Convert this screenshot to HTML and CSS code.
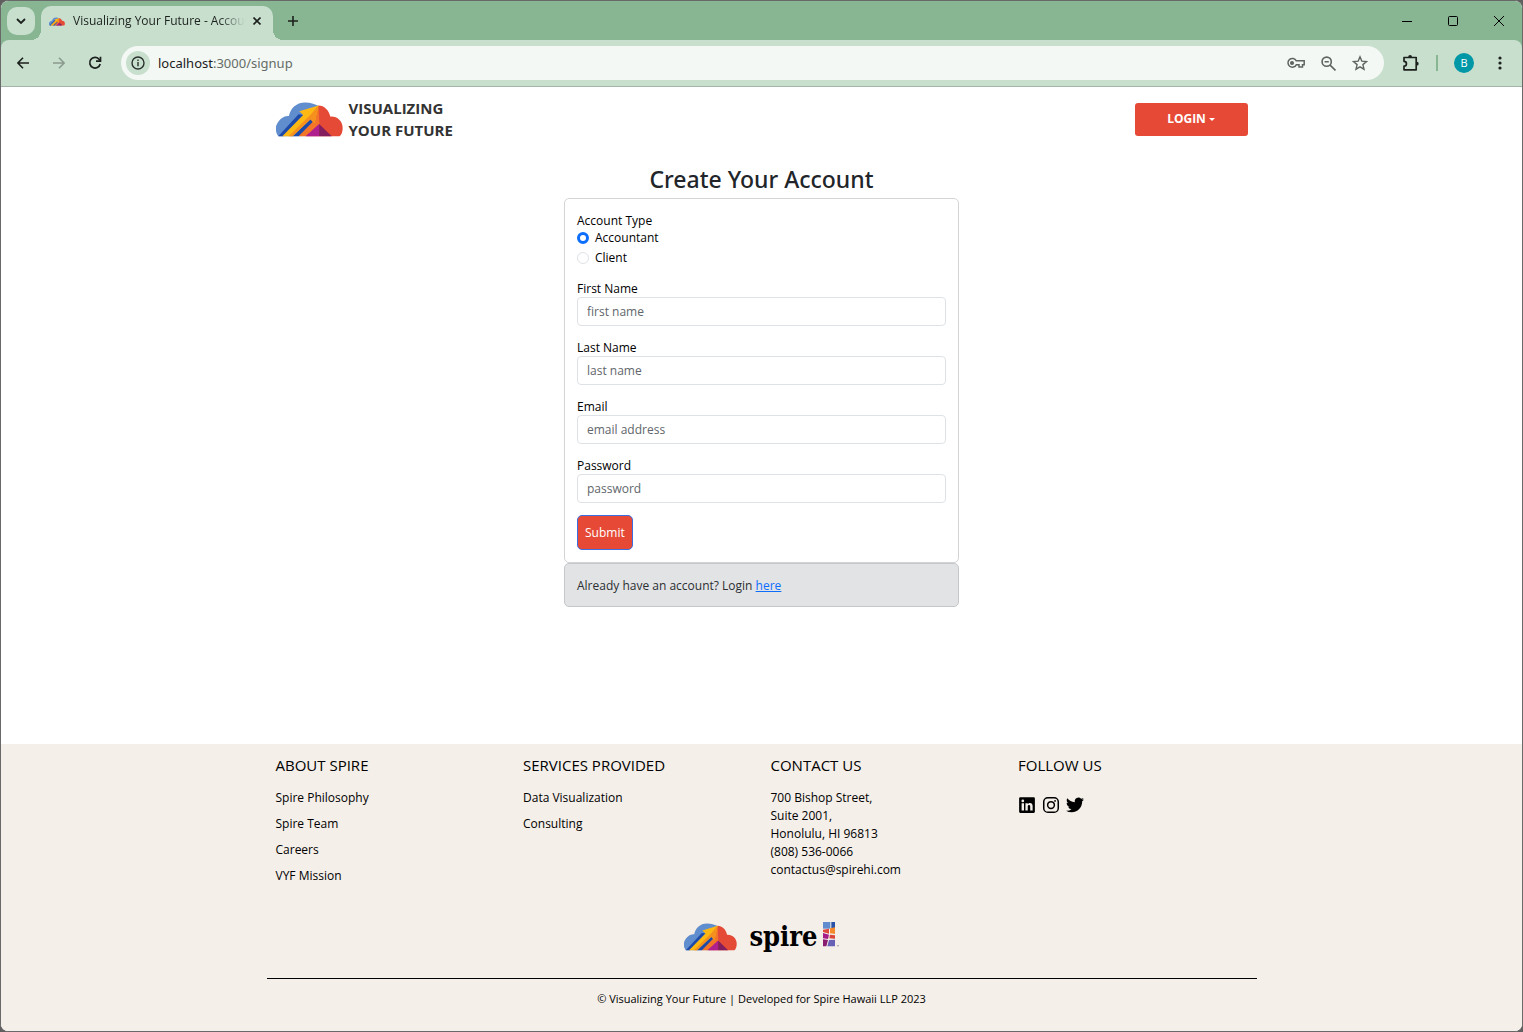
FILE: index.html
```html
<!DOCTYPE html>
<html lang="en">
<head>
<meta charset="utf-8">
<meta name="viewport" content="width=device-width, initial-scale=1">
<title>Visualizing Your Future - Account</title>
<link rel="stylesheet" href="styles.css">
</head>
<body>
<svg class="sprite" aria-hidden="true">
  <symbol id="cloud" viewBox="30 29 202 103">
    <path fill="#5f8dcd" d="M37 131C29 122 27 104 33 94c5-10 18-26 36-24 4-22 21-41 49-41 16 0 28 5 38 9l8 92z"/>
    <path fill="#e44a36" d="M158 38c17 0 32 14 36 34 19-2 37 13 37 34 0 11-3 20-9 25h-98l14-70z"/>
    <path fill="#f37527" d="M158 38l3 56-38 37H97l40-45z"/>
    <path fill="#1d4aa8" d="M37 131l61-66 14 2-60 64zM78 131l56-51 7 7-43 44z"/>
    <path fill="#fdb813" d="M49 131l63-64-12-11 58-18-12 54-12-12-54 51z"/>
    <path fill="#f58f1e" d="M158 38l-12 54-12-12-54 51H68l66-65z"/>
    <path fill="#b01f8e" d="M119 131l41-37v37z"/>
    <path fill="#831d5e" d="M160 94l38 37h-38z"/>
  </symbol>
</svg>
<div class="window">
  <div class="chrome">
    <div class="tabstrip">
      <button class="tab-search" aria-label="Search tabs"><svg width="10" height="10" viewBox="0 0 10 10" fill="none" stroke="#1c211d" stroke-width="1.8"><path d="M1 3l4 4 4-4"/></svg></button>
      <div class="tab">
        <svg class="favicon"><use href="#cloud"/></svg>
        <span class="tab-title">Visualizing Your Future - Accou</span>
        <button class="plain" aria-label="Close tab"><svg width="8" height="8" viewBox="0 0 8 8" stroke="#1c211d" stroke-width="1.6"><path d="M.5.5l7 7M7.500.5l-7 7"/></svg></button>
      </div>
      <button class="plain new-tab" aria-label="New tab"><svg width="12" height="12" viewBox="0 0 12 12" stroke="#1c211d" stroke-width="1.6"><path d="M6 1v10M1 6h10"/></svg></button>
      <div class="window-controls">
        <button class="plain" aria-label="Minimize"><svg width="10" height="10" viewBox="0 0 10 10" stroke="#000"><path d="M0 5.500h10"/></svg></button>
        <button class="plain" aria-label="Maximize"><svg width="10" height="10" viewBox="0 0 10 10" fill="none" stroke="#000"><rect x=".5" y=".5" width="9" height="9" rx="1"/></svg></button>
        <button class="plain" aria-label="Close"><svg width="10" height="10" viewBox="0 0 10 10" stroke="#000"><path d="M0 0l10 10M10 0L0 10"/></svg></button>
      </div>
    </div>
    <div class="toolbar">
      <button class="plain nav" aria-label="Back"><svg width="12" height="12" viewBox="0 0 12 12" fill="none" stroke="#1c211d" stroke-width="1.6"><path d="M12 6H1M6 .8L.9 6 6 11.200"/></svg></button>
      <button class="plain nav" aria-label="Forward"><svg width="12" height="12" viewBox="0 0 12 12" fill="none" stroke="#8b9a8f" stroke-width="1.6"><path d="M0 6h11M6 .8L11.100 6 6 11.200"/></svg></button>
      <button class="plain nav" aria-label="Reload"><svg width="14" height="14" viewBox="0 0 14 14" fill="none" stroke="#1c211d" stroke-width="1.7"><path d="M12.200 8A5.300 5.300 0 1 1 11 3.200L12.500 5"/><path d="M12.500.8V5.200H8"/></svg></button>
      <div class="omnibox">
        <span class="site-info"><svg width="14" height="14" viewBox="0 0 14 14" fill="none" stroke="#2a312c" stroke-width="1.4"><circle cx="7" cy="7" r="6"/><path d="M7 6v4.300M7 3.500v1.500"/></svg></span>
        <span class="url">localhost<span class="path">:3000/signup</span></span>
        <span class="omni-icons">
          <svg width="18" height="12" viewBox="0 0 18 12" fill="none" stroke="#5f6561" stroke-width="1.5"><path d="M9.300 3.800A4.400 4.400 0 1 0 9.300 7.800H12V10h3.500V7.800h1.700v-4z"/><circle cx="5" cy="6" r="1.300" fill="#5f6561"/></svg>
          <svg width="15" height="15" viewBox="0 0 14 14" fill="none" stroke="#5f6561" stroke-width="1.5"><circle cx="5.300" cy="5.300" r="4.300"/><path d="M8.500 8.500l5 5M3.300 5.300h4"/></svg>
          <svg width="16" height="16" viewBox="0 0 16 16" fill="none" stroke="#5f6561" stroke-width="1.4"><path d="M8 1.800l1.800 4.300 4.700.4-3.600 3.100 1.100 4.600L8 11.800l-4 2.400 1.100-4.600L1.500 6.500l4.700-.4z"/></svg>
        </span>
      </div>
      <div class="tools">
        <svg width="18" height="18" viewBox="0 0 18 18" fill="none" stroke="#1c211d" stroke-width="1.700"><path d="M2 3.500h12.200v12.300H2v-3.600a2.100 2.100 0 0 0 0-4.900z" stroke-linejoin="round"/><path d="M6.200 3a1.900 1.900 0 0 1 3.800 0zM14.800 7.800a1.900 1.900 0 0 1 0 3.800z" fill="#1c211d" stroke="none"/></svg>
        <span class="divider"></span>
        <button class="avatar" aria-label="Profile">B</button>
        <button class="plain menu" aria-label="Menu"><svg width="4" height="14" viewBox="0 0 4 14" fill="#1c211d"><circle cx="2" cy="2" r="1.600"/><circle cx="2" cy="7" r="1.600"/><circle cx="2" cy="12" r="1.600"/></svg></button>
      </div>
    </div>
  </div>

  <header class="container header">
    <a class="brand" href="#"><svg class="brand-logo"><use href="#cloud"/></svg><span>VISUALIZING<br>YOUR FUTURE</span></a>
    <button class="login">LOGIN<span class="caret"></span></button>
  </header>

  <main class="main">
    <h1>Create Your Account</h1>
    <form class="card">
      <fieldset>
        <legend>Account Type</legend>
        <label class="radio"><input type="radio" name="type" checked>Accountant</label>
        <label class="radio"><input type="radio" name="type">Client</label>
      </fieldset>
      <div class="field"><label for="first">First Name</label><input id="first" type="text" placeholder="first name"></div>
      <div class="field"><label for="last">Last Name</label><input id="last" type="text" placeholder="last name"></div>
      <div class="field"><label for="email">Email</label><input id="email" type="email" placeholder="email address"></div>
      <div class="field"><label for="password">Password</label><input id="password" type="password" placeholder="password"></div>
      <button class="submit" type="submit">Submit</button>
    </form>
    <div class="notice">Already have an account? Login <a href="#">here</a></div>
  </main>

  <footer class="footer">
    <div class="container columns">
      <section><h2>ABOUT SPIRE</h2>
        <ul><li><a href="#">Spire Philosophy</a></li><li><a href="#">Spire Team</a></li><li><a href="#">Careers</a></li><li><a href="#">VYF Mission</a></li></ul></section>
      <section><h2>SERVICES PROVIDED</h2>
        <ul><li><a href="#">Data Visualization</a></li><li><a href="#">Consulting</a></li></ul></section>
      <section><h2>CONTACT US</h2>
        <address>700 Bishop Street,<br>Suite 2001,<br>Honolulu, HI 96813<br>(808) 536-0066<br>contactus@spirehi.com</address></section>
      <section><h2>FOLLOW US</h2>
        <div class="social">
          <a href="#" aria-label="LinkedIn"><svg width="18" height="18" viewBox="0 0 24 24"><path fill-rule="evenodd" d="M3 1.500h18A1.500 1.500 0 0 1 22.500 3v18a1.500 1.500 0 0 1-1.500 1.500H3A1.500 1.500 0 0 1 1.500 21V3A1.500 1.500 0 0 1 3 1.500zM4.800 9.500v9.800H8V9.500zM6.400 4.700a1.800 1.800 0 1 0 0 3.600 1.800 1.800 0 0 0 0-3.600zM9.900 9.500v9.800H13v-5c0-1.400.5-2.300 1.800-2.300s1.500 1 1.500 2.400v4.900h3.200v-5.500c0-2.800-.8-4.600-3.500-4.600-1.600 0-2.500.8-3 1.600V9.500z"/></svg></a>
          <a href="#" aria-label="Instagram"><svg width="18" height="18" viewBox="0 0 24 24" fill="none" stroke="#000" stroke-width="2"><rect x="2.300" y="2.300" width="19.400" height="19.400" rx="5.500"/><circle cx="12" cy="12" r="4.500"/><circle cx="17.400" cy="6.600" r="1.200" fill="#000" stroke="none"/></svg></a>
          <a href="#" aria-label="Twitter"><svg width="18" height="18" viewBox="0 0 24 24"><path d="M23.950 4.570a10 10 0 0 1-2.820.770 4.960 4.960 0 0 0 2.160-2.720c-.950.550-2.010.960-3.130 1.180a4.920 4.920 0 0 0-8.380 4.480C7.690 8.090 4.070 6.130 1.640 3.160a4.820 4.820 0 0 0-.670 2.480c0 1.710.870 3.210 2.190 4.100a4.900 4.900 0 0 1-2.230-.620v.060a4.920 4.920 0 0 0 3.950 4.830 5 5 0 0 1-2.210.080 4.940 4.940 0 0 0 4.600 3.420A9.870 9.870 0 0 1 0 19.540a14 14 0 0 0 7.560 2.210c9.050 0 14-7.500 14-13.980 0-.210 0-.420-.020-.630a9.940 9.940 0 0 0 2.410-2.570z"/></svg></a>
        </div></section>
    </div>
    <div class="partners">
      <svg class="footer-cloud"><use href="#cloud"/></svg>
      <span class="spire">spire</span>
      <svg class="spire-mark" width="16" height="26" viewBox="0 0 48 78"><path fill="#5f8dcd" d="M0 3h22v20H0z"/><path fill="#2952a8" d="M25 3h11v18l-11 2z"/><path fill="#e0483c" d="M0 26l18-3v15L0 33z"/><path fill="#f58a2c" d="M21 22l15-3v20l-15-2z"/><path fill="#a51c88" d="M0 36l18 5-3 13-15-2z"/><path fill="#d9453b" d="M21 41l15 2v10l-17-1z"/><path fill="#891b70" d="M0 55l15 2-5 19H0z"/><path fill="#6861b5" d="M18 57l18-1v20H13z"/><path fill="#777" d="M43 73h4v3h-4z"/></svg>
    </div>
    <div class="container copyright">© Visualizing Your Future | Developed for Spire Hawaii LLP 2023</div>
  </footer>
</div>
</body>
</html>
```
FILE: styles.css
```css
* { box-sizing: border-box; }
body { margin: 0; background: #5f5f5f; font: 12px/18px "Open Sans", sans-serif; color: #000; }
button, input { font: inherit; }
a { color: inherit; text-decoration: none; }
svg { display: block; flex: none; }
.sprite { position: absolute; width: 0; height: 0; }
.window { display: flex; flex-direction: column; min-height: 100vh; border: 1px solid #696969; border-radius: 8px; overflow: hidden; background: #fff; }
.plain { display: grid; place-items: center; border: 0; padding: 0; background: none; }

.chrome { background: #88b693; }
.tabstrip { display: flex; align-items: center; height: 39px; padding-left: 6px; }
.tab-search { display: grid; place-items: center; width: 28px; height: 28px; padding: 0; border: 0; border-radius: 10px; background: #c8dfce; }
.tab { position: relative; display: flex; align-items: center; align-self: flex-end; gap: 8px; width: 232px; height: 34px; margin-left: 6px; padding: 0 12px 4px 8px; border-radius: 10px 10px 0 0; background: #c8dfce; }
.tab::before, .tab::after { content: ""; position: absolute; bottom: 0; width: 10px; height: 10px; }
.tab::before { right: 100%; background: radial-gradient(circle at 0 0, transparent 10px, #c8dfce 10px); }
.tab::after { left: 100%; background: radial-gradient(circle at 100% 0, transparent 10px, #c8dfce 10px); }
.favicon { width: 16px; height: 9px; }
.tab-title { flex: 1; white-space: nowrap; color: #1c211d; mask-image: linear-gradient(to right, #000 85%, transparent); }
.new-tab { width: 28px; height: 28px; margin-left: 6px; }
.window-controls { display: flex; align-self: stretch; margin-left: auto; }
.window-controls button { width: 46px; }

.toolbar { display: flex; align-items: center; height: 47px; padding-left: 4px; border-bottom: 1px solid #a3b5a8; background: #c8dfce; border-radius: 8px 8px 0 0; }
.nav { width: 36px; height: 34px; }
.omnibox { display: flex; flex: 1; align-items: center; height: 34px; margin-left: 8px; padding: 0 16px 0 5px; border-radius: 17px; background: #f3f8f4; }
.site-info { display: grid; place-items: center; width: 24px; height: 24px; border-radius: 50%; background: #c8dfce; }
.url { margin-left: 8px; color: #1c211d; font-family: "Noto Sans", sans-serif; font-size: 13px; }
.path { color: #656c67; }
.omni-icons { display: flex; align-items: center; gap: 16px; margin-left: auto; }
.tools { display: flex; align-items: center; gap: 16px; padding: 0 12px 0 18px; }
.divider { width: 2px; height: 16px; background: #88b693; }
.avatar { width: 20px; height: 20px; padding: 0; border: 0; border-radius: 50%; background: #0097a7; color: #fff; font-size: 11px; line-height: 20px; }
.menu { width: 20px; height: 28px; }

.container { width: 100%; max-width: 990px; margin: 0 auto; padding: 0 9px; }
.header { display: flex; align-items: center; justify-content: space-between; height: 64px; }
.brand { display: flex; align-items: center; gap: 6px; color: #333; font-size: 15px; font-weight: 700; line-height: 22px; }
.brand-logo { width: 67px; height: 35px; }
.login { display: flex; align-items: center; justify-content: center; gap: 3px; width: 113px; height: 33px; border: 0; border-radius: 3px; background: #e64a37; color: #fff; font-weight: 700; }
.caret { border: 3px solid transparent; border-top-color: #fff; border-bottom: 0; }

.main { flex: 1; width: 100%; max-width: 395px; margin: 0 auto; padding-top: 14px; }
h1 { margin: 0 0 4px; color: #212529; font-family: "Noto Sans", sans-serif; font-size: 23px; font-weight: 500; line-height: 29px; text-align: center; }
.card { padding: 13px 12px 12px; border: 1px solid #d3d4d5; border-radius: 5px; }
fieldset { margin: 0; padding: 0; border: 0; }
legend { padding: 0; line-height: 17px; }
.radio { display: flex; align-items: center; gap: 6px; height: 18px; margin-bottom: 2px; }
.radio:last-child { margin-bottom: 0; }
.radio input { appearance: none; width: 12px; height: 12px; margin: 0; border: 1px solid #dee2e6; border-radius: 50%; background: #fff; }
.radio input:checked { border: 3px solid #0d6efd; }
.field { display: flex; flex-direction: column; margin-top: 13px; }
.field label { line-height: 17px; }
.field input { width: 100%; height: 29px; padding: 0 9px; border: 1px solid #dee2e6; border-radius: 4px; color: #212529; }
.field input::placeholder { color: #61666b; opacity: 1; }
.submit { display: block; height: 35px; margin-top: 12px; padding: 0 7px; border: 1px solid #3d6ee0; border-radius: 5px; background: #e64a37; color: #fff; }
.notice { padding: 13px 12px 11px; border: 1px solid #c4c8cb; border-radius: 5px; background: #e2e3e5; color: #2b2f32; }
.notice a { color: #0d6efd; text-decoration: underline; }

.footer { background: #f4efe9; padding-bottom: 23px; }
.columns { display: grid; grid-template-columns: repeat(4, 1fr); padding: 11px 0 0; }
.columns section { padding: 0 9px; }
h2 { margin: 0 0 14px; font-size: 15px; font-weight: 500; line-height: 20px; }
ul { margin: 0; padding: 0; list-style: none; }
li { height: 18px; margin-bottom: 8px; }
address { font-style: normal; }
.social { display: flex; gap: 6px; padding-top: 7px; }
.partners { display: flex; align-items: center; justify-content: center; height: 32px; margin: 28px 0 25px; }
.footer-cloud { width: 53px; height: 28px; margin-right: 12px; }
.spire { font: 700 27px/32px "DejaVu Serif Condensed", "DejaVu Serif", serif; }
.spire-mark { align-self: flex-start; margin-left: 5px; }
.copyright { border-top: 1px solid #000; padding-top: 11px; font-size: 11px; text-align: center; }
```
